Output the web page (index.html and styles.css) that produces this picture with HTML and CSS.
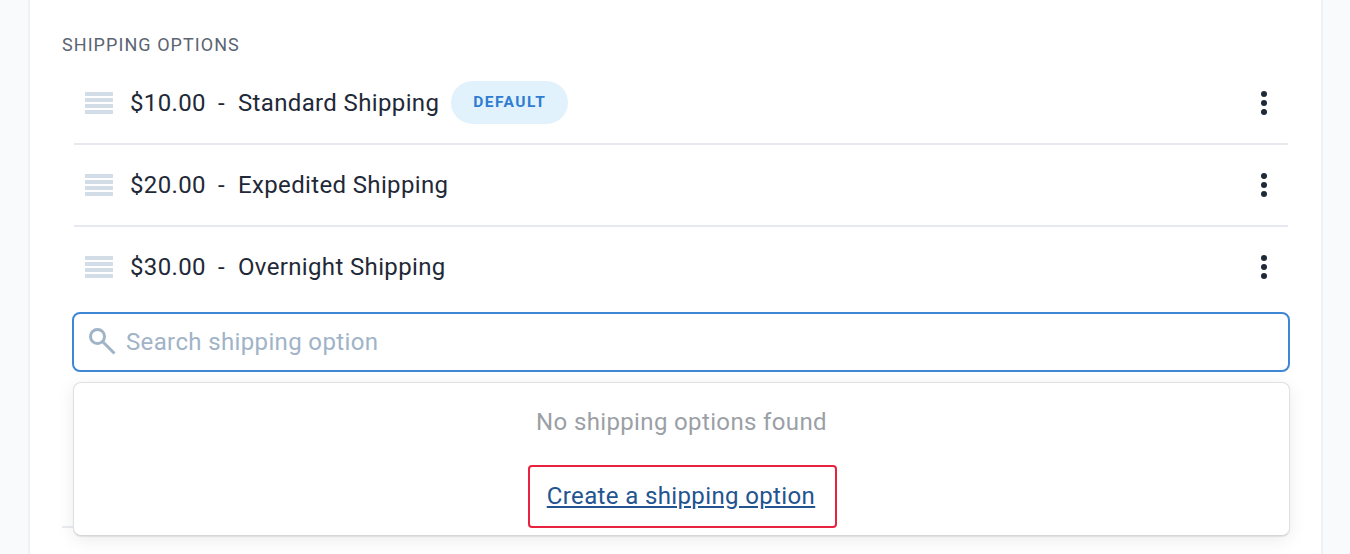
FILE: index.html
```html
<!DOCTYPE html>
<html lang="en">
<head>
	<meta charset="utf-8" />
	<title>Shipping options</title>
	<link rel="stylesheet" href="styles.css">
</head>
<body>
	<div class="card">
		<div class="section">
			<h3 class="section-title">SHIPPING OPTIONS</h3>
			<ul class="options">
				<li class="option">
					<span class="drag"><i></i><i></i><i></i><i></i></span>
					<span class="price">$10.00</span>
					<span class="dash">-</span>
					<span class="name">Standard Shipping</span>
					<span class="badge">DEFAULT</span>
					<span class="kebab"><i></i><i></i><i></i></span>
				</li>
				<li class="option">
					<span class="drag"><i></i><i></i><i></i><i></i></span>
					<span class="price">$20.00</span>
					<span class="dash">-</span>
					<span class="name">Expedited Shipping</span>
					<span class="kebab"><i></i><i></i><i></i></span>
				</li>
				<li class="option">
					<span class="drag"><i></i><i></i><i></i><i></i></span>
					<span class="price">$30.00</span>
					<span class="dash">-</span>
					<span class="name">Overnight Shipping</span>
					<span class="kebab"><i></i><i></i><i></i></span>
				</li>
			</ul>
			<div class="search">
				<svg class="search-icon" width="28" height="28" viewBox="0 0 28 28"><circle cx="8.500" cy="8.500" r="7" stroke="#a0b3c7" stroke-width="3" fill="none"/><path d="M13.500 13.500l12 12" stroke="#a0b3c7" stroke-width="3" fill="none"/></svg>
				<span class="placeholder">Search shipping option</span>
			</div>
			<div class="section-end"></div>
			<div class="dropdown">
				<p class="empty">No shipping options found</p>
				<div class="create"><a href="#">Create a shipping option</a></div>
			</div>
		</div>
	</div>
</body>
</html>
```

FILE: styles.css
```css
html {
	box-sizing: border-box;
	font-family: Roboto, "Liberation Sans", sans-serif;
	background-color: #f9fafc;
}

*, *:before, *:after {
	box-sizing: inherit;
}

body {
	margin: 0;
	height: 554px;
	overflow: hidden;
	padding: 0 27px 0 28px;
}

.card {
	height: 554px;
	background-color: white;
	border-left: 2px solid #f0f1f5;
	border-right: 2px solid #f0f1f5;
	padding: 0 32px;
}

.section {
	position: relative;
	padding-top: 35px;
}

.section-title {
	margin: 0;
	font-size: 18px;
	line-height: 20px;
	font-weight: 400;
	letter-spacing: 1.06px;
	color: #5b6472;
}

.options {
	list-style: none;
	margin: 8px 0 0 12px;
	padding: 0;
	width: 1214px;
}

.option {
	display: flex;
	align-items: center;
	height: 82px;
	padding-left: 11px;
	border-bottom: 2px solid #e6eaf0;
	font-size: 24px;
	letter-spacing: 0.36px;
	color: #1f2937;
}

.option:last-child {
	height: 80px;
	border-bottom: 0;
}

.drag {
	display: flex;
	flex-direction: column;
	gap: 2px;
	width: 28px;
	margin-right: 17px;
	flex: none;
}

.drag i {
	display: block;
	height: 4px;
	background-color: #d3dde7;
}

.dash {
	margin: 0 13px 0 12px;
}

.badge {
	margin: 0 0 1px 12px;
	width: 117px;
	height: 43px;
	line-height: 43px;
	text-align: center;
	border-radius: 22px;
	background-color: #e1f2fd;
	color: #2f7dd1;
	font-size: 15.5px;
	font-weight: 700;
	letter-spacing: 1.5px;
}

.kebab {
	margin-left: auto;
	margin-right: 21px;
	display: flex;
	flex-direction: column;
	gap: 3.3px;
}

.kebab i {
	display: block;
	width: 6px;
	height: 6px;
	border-radius: 50%;
	background-color: #1f2937;
}

.search {
	display: flex;
	align-items: center;
	margin: 5px 0 0 10px;
	width: 1218px;
	height: 60px;
	border: 2px solid #3f87d5;
	border-radius: 8px;
	padding-left: 15px;
}

.search-icon {
	margin-right: 9px;
	flex: none;
}

.placeholder {
	font-size: 24px;
	letter-spacing: 0.36px;
	color: #a0b3c7;
}

.section-end {
	margin-top: 154px;
	width: 1200px;
	border-top: 2px solid #e9ecf1;
}

.dropdown {
	position: absolute;
	top: 382px;
	left: 11px;
	width: 1217px;
	height: 154px;
	background-color: white;
	border: 1px solid #dfe0e3;
	border-bottom-color: #d5d6da;
	border-radius: 8px;
	box-shadow: 0 1px 1px rgba(0, 0, 0, 0.08), 0 4px 18px rgba(0, 0, 0, 0.08);
	text-align: center;
}

.empty {
	margin: 24px 0 0;
	font-size: 24px;
	line-height: 30px;
	letter-spacing: 0.36px;
	color: #9b9fa6;
}

.create {
	margin: 28px 0 0 454px;
	width: 309px;
	height: 63px;
	line-height: 59px;
	padding-right: 3px;
	border: 2px solid #e8223f;
	border-radius: 4px;
	font-size: 24px;
	letter-spacing: 0.37px;
}

.create a {
	color: #22548f;
}
```
